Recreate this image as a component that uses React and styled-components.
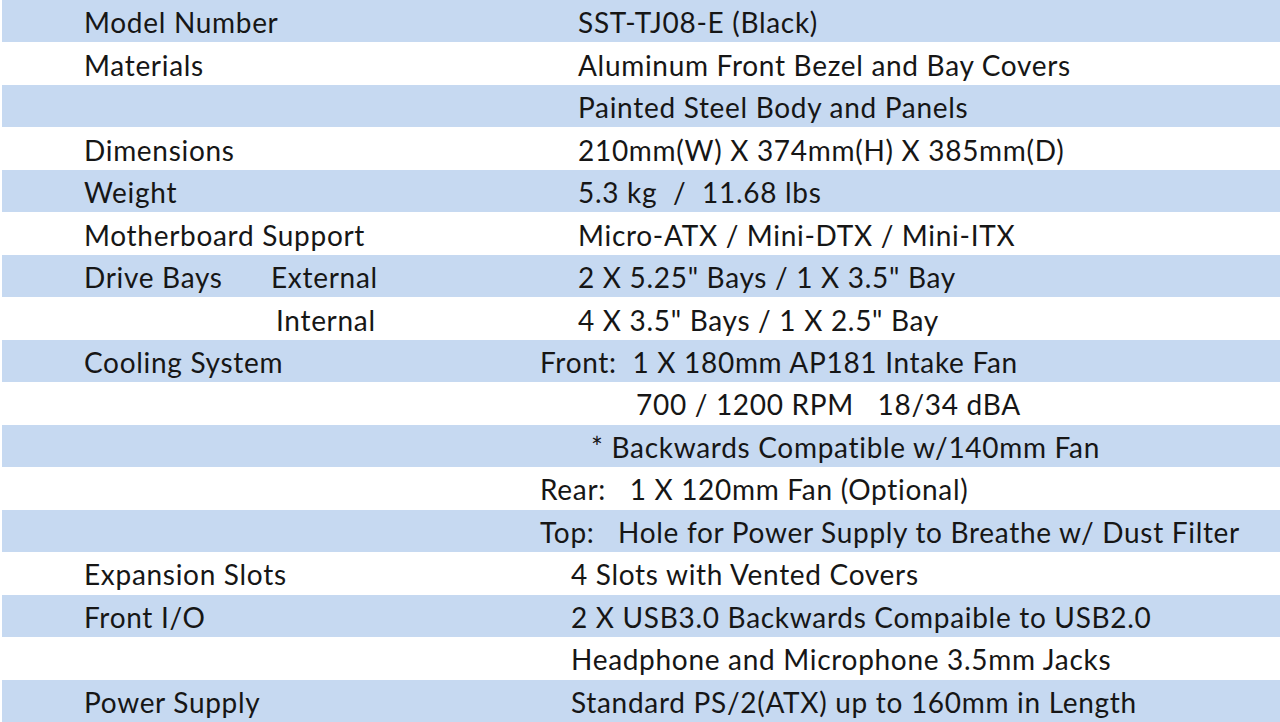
import styled, { createGlobalStyle } from "styled-components";

const GlobalStyle = createGlobalStyle`
  html, body {
    margin: 0;
    padding: 0;
    background: #ffffff;
  }
`;

const SpecTable = styled.div`
  display: grid;
  grid-template-rows: repeat(17, 1fr);
  height: 722px;
  width: 1280px;
  padding-left: 2px;
  box-sizing: border-box;
  font-family: Lato, "Open Sans", sans-serif;
  font-size: 28px;
  letter-spacing: 0.7px;
  color: #161616;
  overflow: hidden;
`;

const SpecRow = styled.div`
  display: flex;
  align-items: center;
  padding-left: 82px;
  padding-top: 2px;
  background: ${(props) => (props.$shaded ? "#c6d9f1" : "#ffffff")};
  white-space: pre;
`;

const Label = styled.div`
  width: 187px;
  flex-shrink: 0;
`;

const SubLabel = styled.div`
  width: 269px;
  flex-shrink: 0;
  box-sizing: border-box;
  padding-left: ${(props) => props.$offset}px;
`;

const Value = styled.div`
  padding-left: ${(props) => props.$offset}px;
`;

const rows = [
  { label: "Model Number", value: "SST-TJ08-E (Black)", x: 578 },
  { label: "Materials", value: "Aluminum Front Bezel and Bay Covers", x: 578 },
  { value: "Painted Steel Body and Panels", x: 578 },
  { label: "Dimensions", value: "210mm(W) X 374mm(H) X 385mm(D)", x: 578 },
  { label: "Weight", value: "5.3 kg  /  11.68 lbs", x: 578 },
  { label: "Motherboard Support", value: "Micro-ATX / Mini-DTX / Mini-ITX", x: 578 },
  { label: "Drive Bays", sub: "External", subOffset: 0, value: '2 X 5.25" Bays / 1 X 3.5" Bay', x: 578 },
  { sub: "Internal", subOffset: 5, value: '4 X 3.5" Bays / 1 X 2.5" Bay', x: 578 },
  { label: "Cooling System", value: "Front:  1 X 180mm AP181 Intake Fan", x: 540 },
  { value: "700 / 1200 RPM   18/34 dBA", x: 636 },
  { value: "* Backwards Compatible w/140mm Fan", x: 591 },
  { value: "Rear:   1 X 120mm Fan (Optional)", x: 540 },
  { value: "Top:   Hole for Power Supply to Breathe w/ Dust Filter", x: 540 },
  { label: "Expansion Slots", value: "4 Slots with Vented Covers", x: 571 },
  { label: "Front I/O", value: "2 X USB3.0 Backwards Compaible to USB2.0", x: 571 },
  { value: "Headphone and Microphone 3.5mm Jacks", x: 571 },
  { label: "Power Supply", value: "Standard PS/2(ATX) up to 160mm in Length", x: 571 },
];

export default function App() {
  return (
    <>
      <GlobalStyle />
      <SpecTable>
        {rows.map((row, i) => (
          <SpecRow key={i} $shaded={i % 2 === 0}>
            <Label>{row.label || ""}</Label>
            <SubLabel $offset={row.subOffset || 0}>{row.sub || ""}</SubLabel>
            <Value $offset={row.x - 540}>{row.value}</Value>
          </SpecRow>
        ))}
      </SpecTable>
    </>
  );
}
